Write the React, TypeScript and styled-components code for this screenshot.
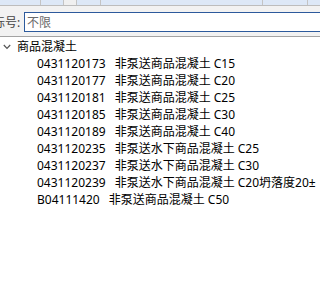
import React from "react";
import styled, { createGlobalStyle } from "styled-components";

const Global = createGlobalStyle`
  html, body { margin: 0; padding: 0; background: #ffffff; }
  body {
    font-family: "Noto Sans", "Noto Sans CJK SC", sans-serif;
    font-size: 12px;
    color: #000;
    overflow: hidden;
  }
`;

const Page = styled.div`
  width: 320px;
  height: 284px;
  overflow: hidden;
  display: flex;
  flex-direction: column;
  background: #fff;
`;

const HeaderStrip = styled.div`
  height: 5px;
  display: flex;
  border-bottom: 1px solid #bdbdbd;
  overflow: hidden;
  background: #dde8f7;
`;

const HeaderCell = styled.div<{ $w: number; $grey?: boolean }>`
  width: ${(p) => p.$w}px;
  flex-shrink: 0;
  height: 100%;
  background: ${(p) => (p.$grey ? "#f0f0f0" : "#dde8f7")};
  border-right: 1px solid #c4c4c4;
  box-sizing: border-box;
  position: relative;
  overflow: hidden;
`;

const CellGlyph = styled.span`
  position: absolute;
  left: 0px;
  top: -11px;
  font-size: 12px;
  line-height: 14px;
  color: #222;
`;

const FilterBar = styled.div`
  height: 31px;
  background: #f2f2f2;
  border-bottom: 1px solid #a3a3a3;
  display: flex;
  align-items: center;
  padding-top: 1px;
  box-sizing: border-box;
  overflow: hidden;
`;

const FilterLabel = styled.span`
  margin-left: -7px;
  width: 31px;
  flex-shrink: 0;
  color: #444;
  white-space: nowrap;
  font-size: 12px;
`;

const SearchBox = styled.div`
  flex: 1;
  margin-right: -10px;
  height: 20px;
  box-sizing: border-box;
  border: 1px solid #2d5a9c;
  background: #fff;
  display: flex;
  align-items: center;
  padding-left: 2px;
  color: #6a6a6a;
  font-size: 12px;
`;

const Tree = styled.div`
  display: flex;
  flex-direction: column;
  padding-top: 1px;
`;

const Row = styled.div<{ $indent: number }>`
  height: 17px;
  display: flex;
  align-items: center;
  padding-left: ${(p) => p.$indent}px;
  white-space: nowrap;
  line-height: 17px;
`;

const Chevron = styled.svg`
  width: 8px;
  height: 6px;
  margin-right: 6px;
  flex-shrink: 0;
`;

const Code = styled.span`
  margin-right: 9px;
`;

const items: [string, string][] = [
  ["0431120173", "非泵送商品混凝土 C15"],
  ["0431120177", "非泵送商品混凝土 C20"],
  ["0431120181", "非泵送商品混凝土 C25"],
  ["0431120185", "非泵送商品混凝土 C30"],
  ["0431120189", "非泵送商品混凝土 C40"],
  ["0431120235", "非泵送水下商品混凝土 C25"],
  ["0431120237", "非泵送水下商品混凝土 C30"],
  ["0431120239", "非泵送水下商品混凝土 C20坍落度20±"],
  ["B04111420", "非泵送商品混凝土 C50"],
];

export default function App() {
  return (
    <Page>
      <Global />
      <HeaderStrip>
        <HeaderCell $w={41} />
        <HeaderCell $w={23} />
        <HeaderCell $w={13} $grey />
        <HeaderCell $w={24} />
        <HeaderCell $w={162} />
        <HeaderCell $w={45} />
        <HeaderCell $w={20}>
          <CellGlyph>1</CellGlyph>
        </HeaderCell>
      </HeaderStrip>
      <FilterBar>
        <FilterLabel>标号:</FilterLabel>
        <SearchBox>不限</SearchBox>
      </FilterBar>
      <Tree>
        <Row $indent={3}>
          <Chevron viewBox="0 0 8 6">
            <path d="M0.8 1 L4 4.4 L7.2 1" fill="none" stroke="#555" strokeWidth="1.2" />
          </Chevron>
          商品混凝土
        </Row>
        {items.map(([code, name]) => (
          <Row key={code} $indent={37}>
            <Code>{code}</Code>
            {name}
          </Row>
        ))}
      </Tree>
    </Page>
  );
}
